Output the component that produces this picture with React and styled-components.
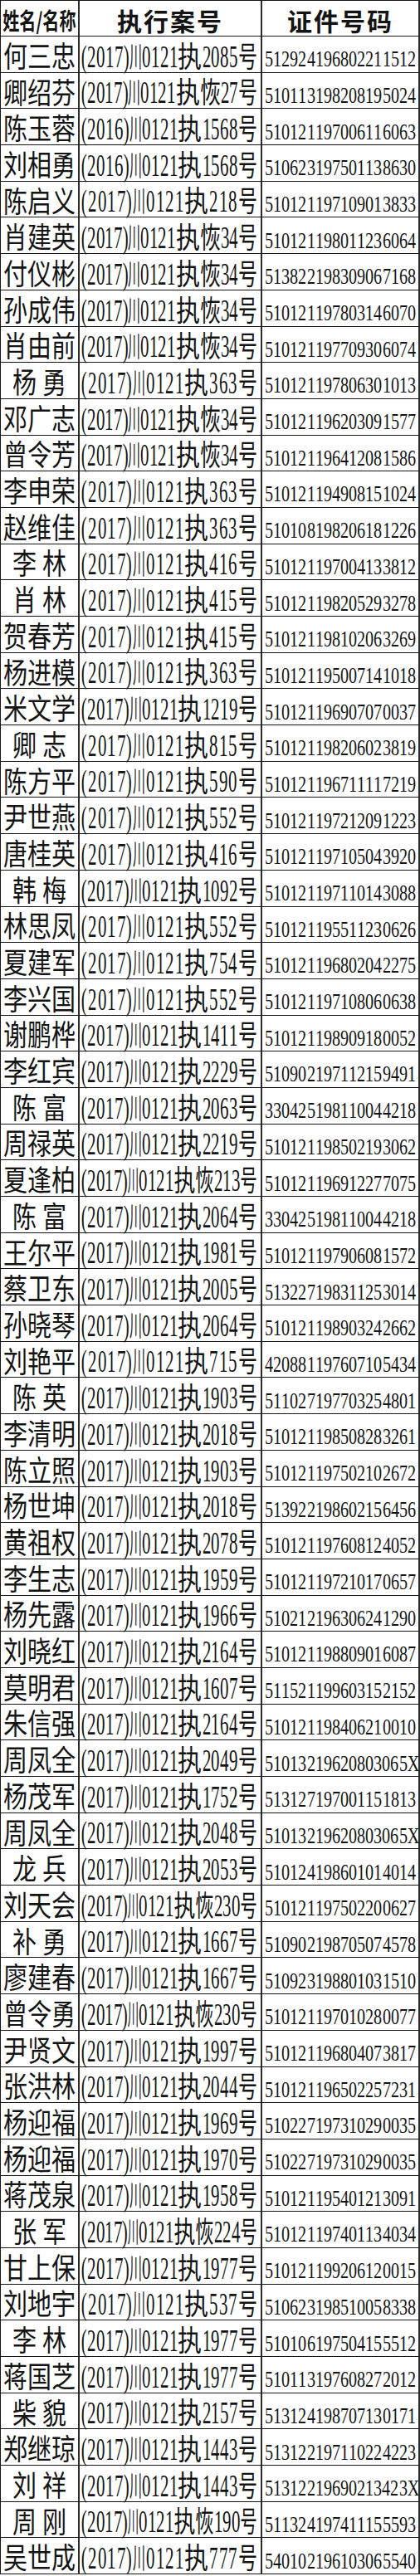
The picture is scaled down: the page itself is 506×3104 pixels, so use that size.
import React from 'react';
import styled, { createGlobalStyle } from 'styled-components';

const GlobalStyle = createGlobalStyle`
  html, body { margin: 0; padding: 0; background: #ffffff; }
  body { width: 506px; }
`;

const HAN = `"Noto Sans CJK SC", "Noto Sans CJK TC", sans-serif`;
const NUM = `"Liberation Serif", "Times New Roman", serif`;
const LINE = '#161616';

const DATA = [
  ['何三忠', '(2017)川0121执2085号', '512924196802211512'],
  ['卿绍芬', '(2017)川0121执恢27号', '510113198208195024'],
  ['陈玉蓉', '(2016)川0121执1568号', '510121197006116063'],
  ['刘相勇', '(2016)川0121执1568号', '510623197501138630'],
  ['陈启义', '(2017)川0121执218号', '510121197109013833'],
  ['肖建英', '(2017)川0121执恢34号', '510121198011236064'],
  ['付仪彬', '(2017)川0121执恢34号', '513822198309067168'],
  ['孙成伟', '(2017)川0121执恢34号', '510121197803146070'],
  ['肖由前', '(2017)川0121执恢34号', '510121197709306074'],
  ['杨勇', '(2017)川0121执363号', '510121197806301013'],
  ['邓广志', '(2017)川0121执恢34号', '510121196203091577'],
  ['曾令芳', '(2017)川0121执恢34号', '510121196412081586'],
  ['李申荣', '(2017)川0121执363号', '510121194908151024'],
  ['赵维佳', '(2017)川0121执363号', '510108198206181226'],
  ['李林', '(2017)川0121执416号', '510121197004133812'],
  ['肖林', '(2017)川0121执415号', '510121198205293278'],
  ['贺春芳', '(2017)川0121执415号', '510121198102063269'],
  ['杨进模', '(2017)川0121执363号', '510121195007141018'],
  ['米文学', '(2017)川0121执1219号', '510121196907070037'],
  ['卿志', '(2017)川0121执815号', '510121198206023819'],
  ['陈方平', '(2017)川0121执590号', '510121196711117219'],
  ['尹世燕', '(2017)川0121执552号', '510121197212091223'],
  ['唐桂英', '(2017)川0121执416号', '510121197105043920'],
  ['韩梅', '(2017)川0121执1092号', '510121197110143088'],
  ['林思凤', '(2017)川0121执552号', '510121195511230626'],
  ['夏建军', '(2017)川0121执754号', '510121196802042275'],
  ['李兴国', '(2017)川0121执552号', '510121197108060638'],
  ['谢鹏桦', '(2017)川0121执1411号', '510121198909180052'],
  ['李红宾', '(2017)川0121执2229号', '510902197112159491'],
  ['陈富', '(2017)川0121执2063号', '330425198110044218'],
  ['周禄英', '(2017)川0121执2219号', '510121198502193062'],
  ['夏逢柏', '(2017)川0121执恢213号', '510121196912277075'],
  ['陈富', '(2017)川0121执2064号', '330425198110044218'],
  ['王尔平', '(2017)川0121执1981号', '510121197906081572'],
  ['蔡卫东', '(2017)川0121执2005号', '513227198311253014'],
  ['孙晓琴', '(2017)川0121执2064号', '510121198903242662'],
  ['刘艳平', '(2017)川0121执715号', '420881197607105434'],
  ['陈英', '(2017)川0121执1903号', '511027197703254801'],
  ['李清明', '(2017)川0121执2018号', '510121198508283261'],
  ['陈立照', '(2017)川0121执1903号', '510121197502102672'],
  ['杨世坤', '(2017)川0121执2018号', '513922198602156456'],
  ['黄祖权', '(2017)川0121执2078号', '510121197608124052'],
  ['李生志', '(2017)川0121执1959号', '510121197210170657'],
  ['杨先露', '(2017)川0121执1966号', '510212196306241290'],
  ['刘晓红', '(2017)川0121执2164号', '510121198809016087'],
  ['莫明君', '(2017)川0121执1607号', '511521199603152152'],
  ['朱信强', '(2017)川0121执2164号', '510121198406210010'],
  ['周凤全', '(2017)川0121执2049号', '51013219620803065X'],
  ['杨茂军', '(2017)川0121执1752号', '513127197001151813'],
  ['周凤全', '(2017)川0121执2048号', '51013219620803065X'],
  ['龙兵', '(2017)川0121执2053号', '510124198601014014'],
  ['刘天会', '(2017)川0121执恢230号', '510121197502200627'],
  ['补勇', '(2017)川0121执1667号', '510902198705074578'],
  ['廖建春', '(2017)川0121执1667号', '510923198801031510'],
  ['曾令勇', '(2017)川0121执恢230号', '510121197010280077'],
  ['尹贤文', '(2017)川0121执1997号', '510121196804073817'],
  ['张洪林', '(2017)川0121执2044号', '510121196502257231'],
  ['杨迎福', '(2017)川0121执1969号', '510227197310290035'],
  ['杨迎福', '(2017)川0121执1970号', '510227197310290035'],
  ['蒋茂泉', '(2017)川0121执1958号', '510121195401213091'],
  ['张军', '(2017)川0121执恢224号', '510121197401134034'],
  ['甘上保', '(2017)川0121执1977号', '510121199206120015'],
  ['刘地宇', '(2017)川0121执537号', '510623198510058338'],
  ['李林', '(2017)川0121执1977号', '510106197504155512'],
  ['蒋国芝', '(2017)川0121执1977号', '510113197608272012'],
  ['柴貌', '(2017)川0121执2157号', '513124198707130171'],
  ['郑继琼', '(2017)川0121执1443号', '513122197110224223'],
  ['刘祥', '(2017)川0121执1443号', '51312219690213423X'],
  ['周刚', '(2017)川0121执恢190号', '511324197411155593'],
  ['吴世成', '(2017)川0121执777号', '540102196103065540'],
];

const Sheet = styled.div`
  width: 506px;
  box-sizing: border-box;
  border-top: 1px solid ${LINE};
  border-left: 1px solid ${LINE};
  color: #141414;
`;

const Row = styled.div`
  display: grid;
  grid-template-columns: 95px 220px 190px;
  height: ${(p) => (p.$head ? 43 : 43.7)}px;
`;

const Cell = styled.div`
  box-sizing: border-box;
  min-width: 0;
  border-right: 2px solid #2b2b2b;
  border-bottom: 1px solid ${LINE};
  display: flex;
`;

const HeadCell = styled(Cell)`
  align-items: center;
  justify-content: center;
  padding-top: 3px;
`;

const NameCell = styled(Cell)`
  align-items: center;
  justify-content: center;
`;

const CaseCell = styled(Cell)`
  flex-direction: column;
  justify-content: flex-end;
  padding: 0 4px 0 2px;
`;

const IdCell = styled(Cell)`
  flex-direction: column;
  justify-content: flex-end;
  padding: 0 3px 1.5px 3px;
`;

const HeadText = styled.span`
  display: inline-block;
  flex: none;
  white-space: nowrap;
  font-family: ${HAN};
  font-weight: 700;
  font-size: ${(p) => p.$fs}px;
  line-height: 1;
  letter-spacing: ${(p) => p.$ls || 0}px;
  transform: scaleX(${(p) => p.$sx || 1});
`;

const NameLine = styled.div`
  display: flex;
  align-items: center;
  justify-content: center;
  gap: ${(p) => p.$gap}px;
  white-space: nowrap;
`;

const FitLine = styled.div`
  display: flex;
  align-items: baseline;
  justify-content: space-between;
  white-space: nowrap;
`;

const Glyph = styled.span`
  display: inline-block;
  flex: none;
  line-height: 1;
  font-size: ${(p) => p.$fs}px;
  transform: scaleX(${(p) => p.$sx});
  margin: 0 ${(p) => (-(1 - p.$sx) * p.$adv * p.$fs) / 2}px;
`;

const HanGlyph = styled(Glyph)`
  font-family: ${HAN};
  font-weight: 400;
`;

const NumGlyph = styled(Glyph)`
  font-family: ${NUM};
`;

const NUM_ADV = { '(': 0.333, ')': 0.333, X: 0.722 };
const numAdv = (c) => NUM_ADV[c] || 0.5;
const isNum = (c) => /[0-9()X]/.test(c);

const CASE_NUM_FS = 37;
const CASE_NUM_SX = 0.565;
const CASE_HAN_FS = 35;
const CASE_HAN_W = { 川: 15, 执: 29, 恢: 25, 号: 23 };
const CASE_AVAIL = 211;

function CaseNumber({ text }) {
  const chars = Array.from(text);
  const numTotal = chars
    .filter(isNum)
    .reduce((s, c) => s + numAdv(c) * CASE_NUM_FS * CASE_NUM_SX, 0);
  const hanTotal = chars
    .filter((c) => !isNum(c))
    .reduce((s, c) => s + (CASE_HAN_W[c] || 27), 0);
  const k = Math.min(1, (CASE_AVAIL - numTotal) / hanTotal);
  return (
    <FitLine>
      {chars.map((c, i) =>
        isNum(c) ? (
          <NumGlyph key={i} $fs={CASE_NUM_FS} $sx={CASE_NUM_SX} $adv={numAdv(c)}>
            {c}
          </NumGlyph>
        ) : (
          <HanGlyph
            key={i}
            $fs={CASE_HAN_FS}
            $sx={((CASE_HAN_W[c] || 27) * k) / CASE_HAN_FS}
            $adv={1}
          >
            {c}
          </HanGlyph>
        )
      )}
    </FitLine>
  );
}

function IdNumber({ text }) {
  return (
    <FitLine>
      {Array.from(text).map((c, i) => (
        <NumGlyph key={i} $fs={28} $sx={0.72} $adv={numAdv(c)}>
          {c}
        </NumGlyph>
      ))}
    </FitLine>
  );
}

function Name({ text }) {
  const chars = Array.from(text);
  return (
    <NameLine $gap={chars.length === 2 ? 6 : 0}>
      {chars.map((c, i) => (
        <HanGlyph key={i} $fs={35} $sx={0.83} $adv={1}>
          {c}
        </HanGlyph>
      ))}
    </NameLine>
  );
}

export default function App() {
  return (
    <>
      <GlobalStyle />
      <Sheet>
        <Row $head>
          <HeadCell>
            <HeadText $fs={28} $sx={0.72}>姓名/名称</HeadText>
          </HeadCell>
          <HeadCell>
            <HeadText $fs={30} $ls={2}>执行案号</HeadText>
          </HeadCell>
          <HeadCell>
            <HeadText $fs={30} $ls={2}>证件号码</HeadText>
          </HeadCell>
        </Row>
        {DATA.map(([name, caseNo, id], i) => (
          <Row key={i}>
            <NameCell>
              <Name text={name} />
            </NameCell>
            <CaseCell>
              <CaseNumber text={caseNo} />
            </CaseCell>
            <IdCell>
              <IdNumber text={id} />
            </IdCell>
          </Row>
        ))}
      </Sheet>
    </>
  );
}
